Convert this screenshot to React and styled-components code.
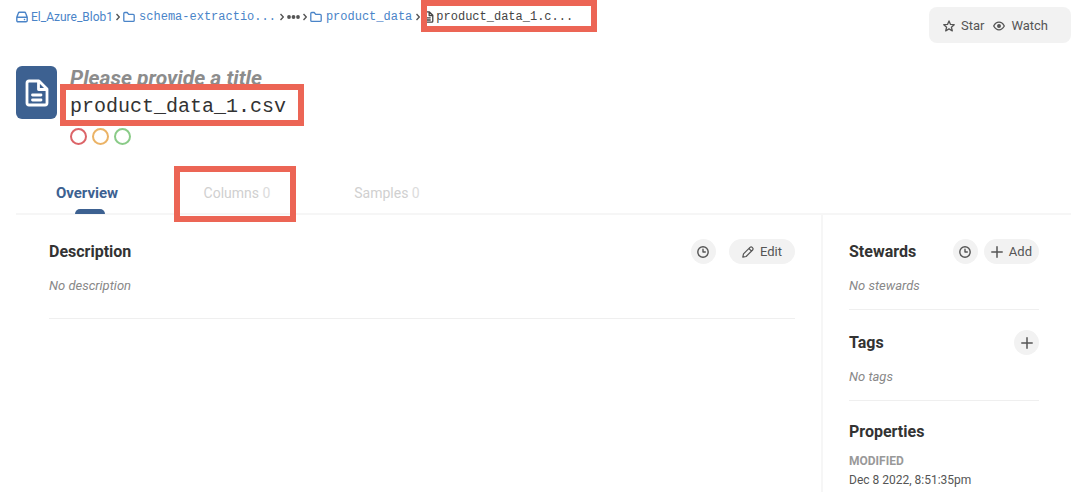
import React from "react";
import styled, { createGlobalStyle, css } from "styled-components";

const GlobalStyle = createGlobalStyle`
  * { box-sizing: border-box; }
  body {
    margin: 0;
    background: #fff;
    color: #333;
    font-family: Roboto, "Liberation Sans", sans-serif;
    font-size: 13px;
    line-height: 18px;
  }
  h1, h2, p, dl, dd { margin: 0; }
  button { font: inherit; color: inherit; border: 0; cursor: pointer; }
  svg { display: block; flex: none; }
`;

const mono = css`
  font-family: "Liberation Mono", monospace;
`;

const outline = css`
  position: relative;
  &::after {
    content: "";
    position: absolute;
    border: 6px solid #ec6555;
    pointer-events: none;
  }
`;

const Page = styled.div`
  min-height: 100vh;
  display: flex;
  flex-direction: column;
  padding: 0 9px 0 16px;
`;

const TopBar = styled.div`
  display: flex;
  justify-content: space-between;
  align-items: flex-start;
  padding-top: 7px;
`;

const Crumbs = styled.nav`
  display: flex;
  align-items: center;
  gap: 3px;
  padding-top: 1px;
  color: #555;
`;

const Crumb = styled.a`
  display: flex;
  align-items: center;
  gap: 3px;
  color: #4a84c8;
  text-decoration: none;
`;

const CrumbText = styled.span`
  font-size: 12px;
  ${(p) => p.$mono && mono}
  ${(p) => p.$mono && "padding: 0 1px;"}
`;

const CurrentCrumb = styled.span`
  display: flex;
  align-items: center;
  gap: 1px;
  color: #444;
  ${outline}
  &::after {
    inset: -8px -23px -6px -2px;
  }
`;

const Actions = styled.div`
  display: flex;
  align-items: center;
  gap: 9px;
  height: 36px;
  padding: 2px 23px 0 14px;
  border-radius: 8px;
  background: #f2f2f2;
  color: #555;
`;

const ActionButton = styled.button`
  display: flex;
  align-items: center;
  gap: 6px;
  padding: 0;
  background: none;
`;

const Entity = styled.header`
  display: flex;
  gap: 13px;
  margin-top: 23px;
`;

const EntityTile = styled.div`
  display: grid;
  place-items: center;
  width: 41px;
  height: 53px;
  border-radius: 6px;
  background: #3d6191;
  color: #fff;
`;

const EntityTitle = styled.p`
  font-size: 21px;
  line-height: 24px;
  font-weight: 700;
  font-style: italic;
  color: #8c8c8c;
`;

const EntityName = styled.h1`
  width: max-content;
  margin-top: 5px;
  font-size: 20px;
  line-height: 24px;
  font-weight: 400;
  ${mono}
  ${outline}
  &::after {
    inset: -11px -18px -7px -10px;
  }
`;

const Flags = styled.div`
  display: flex;
  gap: 5px;
  margin-top: 9px;
`;

const Flag = styled.button`
  width: 17px;
  height: 17px;
  padding: 0;
  border: 2px solid ${(p) => p.$color};
  border-radius: 50%;
  background: none;
`;

const Tabs = styled.div`
  display: flex;
  gap: 8px;
  margin-top: 27px;
  border-bottom: 2px solid #f6f6f6;
`;

const Tab = styled.button`
  position: relative;
  width: 142px;
  height: 42px;
  margin-bottom: -1px;
  padding: 0;
  background: none;
  font-size: ${(p) => (p.$active ? "15px" : "14px")};
  font-weight: ${(p) => (p.$active ? 700 : 400)};
  color: ${(p) => (p.$active ? "#3d6191" : "#d0d0d0")};
  ${(p) =>
    p.$active &&
    css`
      &::before {
        content: "";
        position: absolute;
        bottom: 0;
        left: calc(50% - 12px);
        width: 30px;
        height: 5px;
        border-radius: 5px 5px 0 0;
        background: #3d6191;
      }
    `}
  ${(p) => p.$marked && outline}
  &::after {
    inset: -6px 12px -8px 8px;
  }
`;

const Count = styled.span`
  color: #dcdcdc;
`;

const Body = styled.div`
  flex: 1;
  display: flex;
`;

const Main = styled.main`
  flex: 1;
  padding: 24px 26px 0 33px;
`;

const Sidebar = styled.aside`
  width: 250px;
  padding: 24px 32px 0 26px;
  border-left: 2px solid #f6f6f6;
`;

const Section = styled.section`
  padding-bottom: ${(p) => (p.$roomy ? 23 : 14)}px;
  border-bottom: 1px solid #efefef;
  & + & {
    margin-top: 20px;
  }
`;

const SectionHead = styled.div`
  display: flex;
  align-items: center;
  justify-content: space-between;
  height: 25px;
`;

const Heading = styled.h2`
  font-size: 16px;
  line-height: 20px;
  font-weight: 700;
`;

const Controls = styled.div`
  display: flex;
  gap: ${(p) => (p.$roomy ? 13 : 6)}px;
`;

const Pill = styled.button`
  display: flex;
  align-items: center;
  justify-content: center;
  gap: 6px;
  height: 25px;
  padding: 0 ${(p) => (p.$roomy ? 13 : 7)}px;
  border-radius: 13px;
  background: #f2f2f2;
  color: #555;
`;

const RoundButton = styled(Pill)`
  width: 25px;
  padding: 0;
`;

const Empty = styled.p`
  margin-top: 13px;
  font-style: italic;
  color: #888;
`;

const Properties = styled.section`
  margin-top: 21px;
`;

const PropertyList = styled.dl`
  margin-top: 10px;
  font-size: 12px;
`;

const PropertyName = styled.dt`
  font-weight: 700;
  color: #999;
`;

const PropertyValue = styled.dd`
  margin-top: 1px;
  color: #555;
`;

const Icon = ({ size = 12, box = 12, stroke = 1.4, children }) => (
  <svg
    width={size}
    height={size}
    viewBox={`0 0 ${box} ${box}`}
    fill="none"
    stroke="currentColor"
    strokeWidth={stroke}
    strokeLinecap="round"
    strokeLinejoin="round"
    aria-hidden="true"
  >
    {children}
  </svg>
);

const DriveIcon = () => (
  <Icon>
    <path d="M.8 6.2 2.3 2.2Q2.6 1.3 3.5 1.3h5Q9.4 1.3 9.7 2.2l1.5 4v3.3q0 1.2-1.2 1.2H2Q.8 10.7.8 9.500zM.8 6.300h10.400M8.400 8.500h.2" />
  </Icon>
);
const FolderIcon = () => (
  <Icon stroke={1.3}>
    <path d="M.8 2.500q0-1 1-1h2.400l1.500 1.900h4.500q1 0 1 1v5q0 1-1 1H1.800q-1 0-1-1z" />
  </Icon>
);
const ChevronIcon = () => (
  <svg width="4" height="8" viewBox="0 0 4 8" fill="none" stroke="#555" strokeWidth="1.4" aria-hidden="true">
    <path d="M.5 1 3.300 4 .5 7" />
  </svg>
);
const DotsIcon = () => (
  <svg width="13" height="4" viewBox="0 0 13 4" fill="#555" aria-hidden="true">
    <circle cx="2" cy="2" r="1.900" />
    <circle cx="6.500" cy="2" r="1.900" />
    <circle cx="11" cy="2" r="1.900" />
  </svg>
);
const FileIcon = ({ width, height, stroke }) => (
  <svg
    width={width}
    height={height}
    viewBox="0 0 24 28"
    fill="none"
    stroke="currentColor"
    strokeWidth={stroke}
    strokeLinejoin="round"
    strokeLinecap="round"
    aria-hidden="true"
  >
    <path d="M4 2h10l8 8v14q0 2-2 2H4q-2 0-2-2V4q0-2 2-2zM13.500 2v8.500H22M7.500 16h8.500M7.500 21h8.500" />
  </svg>
);
const StarIcon = () => (
  <Icon stroke={1.3}>
    <path d="M6 .9 7.500 4.400l3.700.3-2.800 2.500.9 3.700L6 8.900l-3.300 2 .9-3.700L.8 4.700l3.700-.3z" />
  </Icon>
);
const EyeIcon = () => (
  <Icon stroke={1.3}>
    <path d="M.7 6Q2.700 2.200 6 2.200T11.300 6Q9.300 9.800 6 9.800T.7 6z" />
    <circle cx="6" cy="6" r="1.300" fill="currentColor" />
  </Icon>
);
const ClockIcon = () => (
  <Icon>
    <circle cx="6" cy="6" r="5.200" />
    <path d="M6 3.300V6h2.300" />
  </Icon>
);
const PencilIcon = () => (
  <Icon stroke={1.2}>
    <path d="M.8 11.200 1.500 7.900 8 1.400q1.200-1 2.200 0l.4.4q1 1 0 2.200L4.100 10.500zM6.900 2.500l2.600 2.600" />
  </Icon>
);
const PlusIcon = () => (
  <Icon stroke={1.500}>
    <path d="M6 .8v10.400M.8 6h10.400" />
  </Icon>
);

export default function App() {
  return (
    <>
      <GlobalStyle />
      <Page>
        <TopBar>
          <Crumbs aria-label="Breadcrumb">
            <Crumb href="#source">
              <DriveIcon />
              <CrumbText>El_Azure_Blob1</CrumbText>
            </Crumb>
            <ChevronIcon />
            <Crumb href="#schema">
              <FolderIcon />
              <CrumbText $mono>schema-extractio...</CrumbText>
            </Crumb>
            <ChevronIcon />
            <DotsIcon />
            <ChevronIcon />
            <Crumb href="#folder">
              <FolderIcon />
              <CrumbText $mono>product_data</CrumbText>
            </Crumb>
            <ChevronIcon />
            <CurrentCrumb aria-current="page">
              <FileIcon width={11} height={12} stroke={3} />
              <CrumbText $mono>product_data_1.c...</CrumbText>
            </CurrentCrumb>
          </Crumbs>
          <Actions>
            <ActionButton>
              <StarIcon />
              Star
            </ActionButton>
            <ActionButton>
              <EyeIcon />
              Watch
            </ActionButton>
          </Actions>
        </TopBar>

        <Entity>
          <EntityTile>
            <FileIcon width={24} height={28} stroke={2.800} />
          </EntityTile>
          <div>
            <EntityTitle>Please provide a title</EntityTitle>
            <EntityName>product_data_1.csv</EntityName>
            <Flags>
              <Flag $color="#dc6468" aria-label="Deprecate" />
              <Flag $color="#ebb366" aria-label="Warn" />
              <Flag $color="#8acb88" aria-label="Endorse" />
            </Flags>
          </div>
        </Entity>

        <Tabs role="tablist">
          <Tab role="tab" aria-selected="true" $active>
            Overview
          </Tab>
          <Tab role="tab" aria-selected="false" $marked>
            Columns <Count>0</Count>
          </Tab>
          <Tab role="tab" aria-selected="false">
            Samples <Count>0</Count>
          </Tab>
        </Tabs>

        <Body>
          <Main>
            <Section $roomy>
              <SectionHead>
                <Heading>Description</Heading>
                <Controls $roomy>
                  <RoundButton aria-label="Description history">
                    <ClockIcon />
                  </RoundButton>
                  <Pill $roomy>
                    <PencilIcon />
                    Edit
                  </Pill>
                </Controls>
              </SectionHead>
              <Empty>No description</Empty>
            </Section>
          </Main>
          <Sidebar>
            <Section>
              <SectionHead>
                <Heading>Stewards</Heading>
                <Controls>
                  <RoundButton aria-label="Steward history">
                    <ClockIcon />
                  </RoundButton>
                  <Pill>
                    <PlusIcon />
                    Add
                  </Pill>
                </Controls>
              </SectionHead>
              <Empty>No stewards</Empty>
            </Section>
            <Section>
              <SectionHead>
                <Heading>Tags</Heading>
                <RoundButton aria-label="Add tag">
                  <PlusIcon />
                </RoundButton>
              </SectionHead>
              <Empty>No tags</Empty>
            </Section>
            <Properties>
              <Heading>Properties</Heading>
              <PropertyList>
                <PropertyName>MODIFIED</PropertyName>
                <PropertyValue>Dec 8 2022, 8:51:35pm</PropertyValue>
              </PropertyList>
            </Properties>
          </Sidebar>
        </Body>
      </Page>
    </>
  );
}
